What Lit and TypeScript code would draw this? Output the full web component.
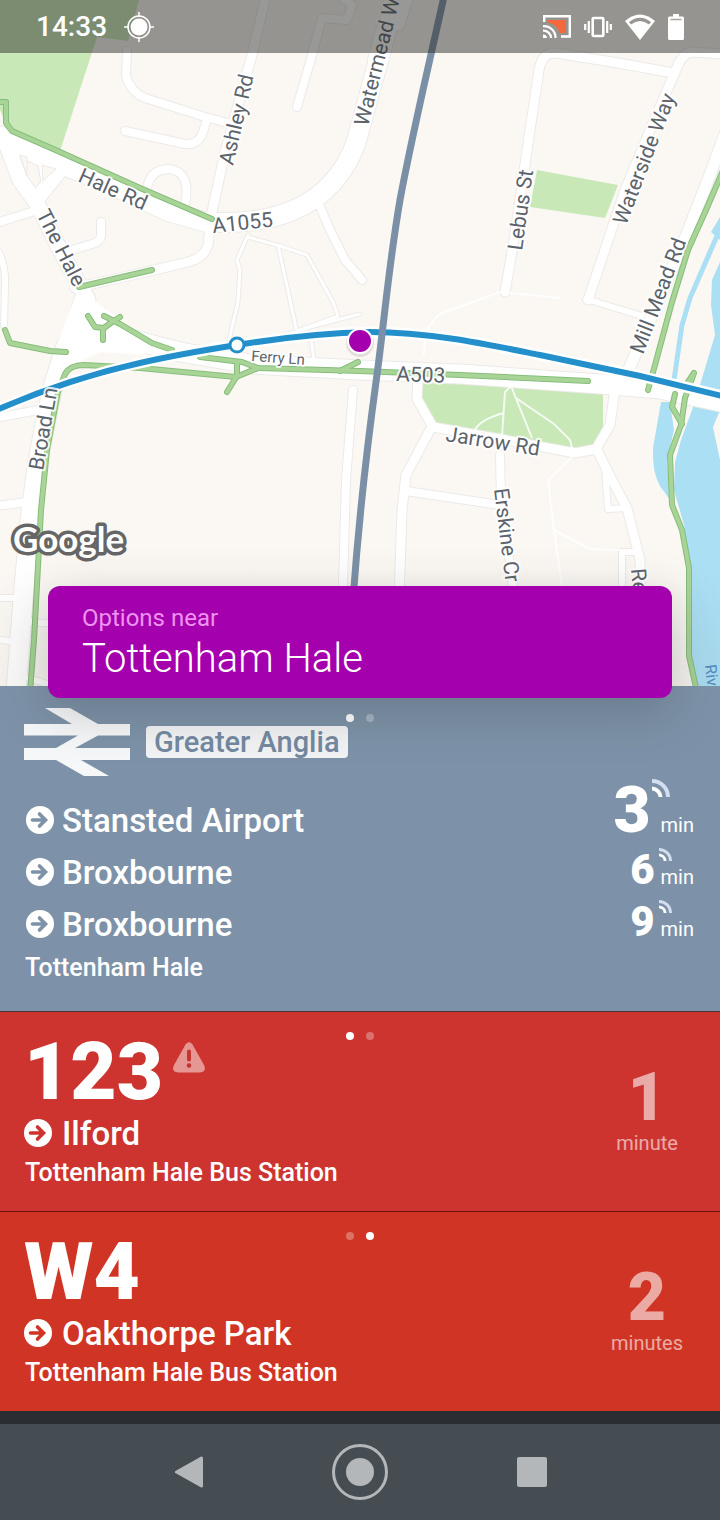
import { LitElement, html, svg, css, nothing } from "lit";
import { customElement, property } from "lit/decorators.js";

interface Departure {
  destination: string;
  minutes: number;
  large?: boolean;
}

interface BusRoute {
  name: string;
  destination: string;
  stop: string;
  minutes: number;
  activePage: number;
  alert: boolean;
  tone: string;
}

const trainDepartures: Departure[] = [
  { destination: "Stansted Airport", minutes: 3, large: true },
  { destination: "Broxbourne", minutes: 6 },
  { destination: "Broxbourne", minutes: 9 },
];

const busRoutes: BusRoute[] = [
  { name: "123", destination: "Ilford", stop: "Tottenham Hale Bus Station", minutes: 1, activePage: 0, alert: true, tone: "crimson" },
  { name: "W4", destination: "Oakthorpe Park", stop: "Tottenham Hale Bus Station", minutes: 2, activePage: 1, alert: false, tone: "scarlet" },
];

/* Streets of the map, grouped by drawn width. */
const streets: { width: number; paths: string[] }[] = [
  {
    width: 3,
    paths: [
      "M248 235L237 260L240 270L238 302L229 340",
      "M278 245L290 300L296 328",
      "M248 237L280 246L307 255L333 302L338 316L300 330",
      "M262 342L310 327L360 314",
      "M310 333L314 360",
    ],
  },
  {
    width: 6,
    paths: [
      "M-4 248Q6 262 5 285L4 325",
      "M586 299L642 316",
      "M605 468L608 509L628 508",
      "M622 600V552H638",
      "M0 598H22",
      "M0 640L20 642",
      "M32 622L54 624",
      "M28 678L54 686",
      "M40 156L45 185",
    ],
  },
  {
    width: 8,
    paths: [
      "M127 51L126 76Q131 92 145 98L205 117L232 124",
      "M125 131L185 144Q199 145 203 132L207 119",
      "M147 188Q150 170 168 169Q192 171 185 205",
      "M340 -4L352 5L347 20L322 18L312 55L297 107",
      "M101 222V236Q100 242 92 244L66 252",
      "M-4 223L38 210",
      "M318 202L331 232L345 260L362 280",
      "M-4 418L38 410",
      "M-4 506L28 502",
      "M353 390L346 480L340 690",
      "M406 491L500 505",
      "M500 455L501 500L515 600",
      "M372 60L380 30L400 26L408 0",
    ],
  },
  {
    width: 9,
    paths: [
      "M266 -4L252 55L225 152L212 212L208 245Q204 258 188 262L150 271L75 288",
      "M505 292L514 240L530 130L539 70Q542 52 556 53L612 62L674 73",
      "M724 54L692 52Q682 53 676 70L655 118L625 190L588 300",
      "M430 430L406 475L402 510L396 690",
      "M597 450L612 480L627 508L640 560V600",
      "M418 378L417 399L433 427L500 439L575 453L596 449L610 425L615 388",
    ],
  },
  {
    width: 11,
    paths: ["M725 134L708 180L686 236L650 320L626 376"],
  },
  {
    width: 15,
    paths: [
      "M4 138L20 180L38 205L60 250L88 300",
      "M60 170L40 195",
    ],
  },
  {
    width: 19,
    paths: [
      "M0 136L40 156L100 180L170 212L205 222Q285 227 325 190Q352 165 360 128L380 55L396 -6",
      "M66 346L52 390L38 460L30 520L23 600L16 692",
      "M84 300L68 350",
      "M88 318L125 338L180 352L250 364L360 370L460 374L600 384L660 389L730 404",
    ],
  },
];

const footpaths: string[] = [
  "M511 386L505 392L502 436",
  "M511 386L532 438",
  "M516 398L554 424L570 440L573 452",
  "M504 413Q478 420 474 432",
  "M573 456L548 480L554 530L564 600",
  "M554 530L590 549L622 550",
  "M424 355Q424 325 440 314L500 292L560 298",
];

const cycleways: string[] = [
  "M-4 102H6V123L12 131L60 152L140 188L212 219",
  "M79 287L152 270",
  "M5 330L10 343L50 351L66 352",
  "M88 316L95 327L104 328L112 322L120 317M103 340V328",
  "M104 316L120 324L152 343L172 350",
  "M200 357L242 362L258 368L360 371L460 375L588 381",
  "M30 692L34 640L41 510L47 450L58 392L65 374Q70 365 84 365L140 368L236 377L258 368",
  "M227 392L237 376V362",
  "M340 371L358 362",
  "M724 168L706 210L688 250L672 302L655 365L648 390",
  "M675 394L672 407L682 424",
  "M684 388L694 373L685 398L681 425L670 455L672 505L682 530L689 568V656L697 692",
];

interface Label {
  text: string;
  x: number;
  y: number;
  angle: number;
  kind?: string;
}

const labels: Label[] = [
  { text: "Ashley Rd", x: 233, y: 166, angle: -77 },
  { text: "Hale Rd", x: 77, y: 181, angle: 24 },
  { text: "The Hale", x: 36, y: 214, angle: 63 },
  { text: "A1055", x: 213, y: 233, angle: -6 },
  { text: "Watermead W", x: 368, y: 127, angle: -76 },
  { text: "Lebus St", x: 522, y: 251, angle: -82 },
  { text: "Waterside Way", x: 626, y: 226, angle: -69 },
  { text: "Mill Mead Rd", x: 643, y: 355, angle: -69 },
  { text: "Broad Ln", x: 43, y: 471, angle: -80 },
  { text: "Ferry Ln", x: 251, y: 361, angle: 4, kind: "small" },
  { text: "A503", x: 396, y: 381, angle: 2 },
  { text: "Jarrow Rd", x: 445, y: 441, angle: 9 },
  { text: "Erskine Cr", x: 494, y: 489, angle: 83 },
  { text: "Re", x: 631, y: 569, angle: 85 },
  { text: "Riv", x: 705, y: 665, angle: 84, kind: "water" },
];

const line = (d: string, cls: string, width?: number) =>
  svg`<path class=${cls} d=${d} stroke-width=${width ?? nothing}></path>`;

@customElement("area-map")
export class AreaMap extends LitElement {
  static styles = css`
    :host { display: block; }
    svg { display: block; width: 100%; height: auto; }
    path { fill: none; }
    .land { fill: #fbf8f4; }
    .park { fill: #c8e8b7; }
    .water { fill: #abdff4; }
    .stream { stroke: #abdff4; }
    .casing { stroke: #eceae8; stroke-linecap: round; stroke-linejoin: round; }
    .road { stroke: #fff; stroke-linecap: round; stroke-linejoin: round; }
    .block { fill: #fbf8f4; stroke: #eceae8; }
    .junction { fill: #fff; }
    .foot { stroke: #fff; stroke-width: 2; stroke-opacity: 0.8; }
    .cycle-edge { stroke: #86bd7a; stroke-width: 6; stroke-linecap: round; stroke-linejoin: round; }
    .cycle { stroke: #a8d597; stroke-width: 4; stroke-linecap: round; stroke-linejoin: round; }
    .tube-halo { stroke: #fff; stroke-width: 11; }
    .tube { stroke: #2390cc; stroke-width: 6; }
    .rail { stroke: #7b90a7; stroke-width: 7; }
    .stop { fill: #fff; stroke: #2390cc; stroke-width: 3; }
    .pin { fill: #a500ad; stroke: #fff; stroke-width: 2; }
    .pin-shade { fill: #000; fill-opacity: 0.1; }
    .label {
      font: 400 21px Roboto, sans-serif;
      fill: #5c636a;
      stroke: #fff;
      stroke-opacity: 0.85;
      stroke-width: 4;
      stroke-linejoin: round;
      paint-order: stroke;
    }
    .label.small { font-size: 15px; }
    .label.water-name { font-size: 16px; fill: #5790c4; stroke: none; }
    .brand {
      font: 700 35px Lato, sans-serif;
      fill: #fff;
      stroke: #666;
      stroke-width: 7;
      stroke-linejoin: round;
      paint-order: stroke;
    }
  `;

  render() {
    const tube =
      "M-6 411C40 391 90 374 140 363C175 355 205 350 237 345C280 338 320 333 370 332C430 332 490 345 540 355L640 376L726 397";
    return html`
      <svg viewBox="0 0 720 686" role="img" aria-label="Map around Tottenham Hale">
        <rect class="land" width="720" height="686"></rect>
        <path class="park" d="M0 0H139L128 41L97 37L60 151L8 128L0 110Z"></path>
        <path class="park" d="M537 170L618 185L605 218L530 207Z"></path>
        <path class="park" d="M422 382L603 391V428L592 446L575 450L433 425L421 402Z"></path>
        <path class="water" d="M711 232L720 217V240Z"></path>
        <path class="stream" stroke-width="5" d="M717 236L690 298L682 325L674 380"></path>
        <path class="water" d="M720 262L712 280L711 305L715 335L700 385L692 410L681 440L675 462L674 490L684 525L690 568V656L698 686H720V460L713 427L720 410Z"></path>
        <path class="water" d="M661 402L653 448Q652 472 660 486L670 500L667 460L674 430L670 402Z"></path>
        ${streets.map((g) => g.paths.map((d) => line(d, "casing", g.width + 2)))}
        ${streets.map((g) => g.paths.map((d) => line(d, "road", g.width)))}
        <path class="junction" d="M78 290L100 305L150 342L145 355L100 352L60 372L52 365L62 330Z"></path>
        <path class="block" d="M20 155L27 157V176Z"></path>
        <path class="block" d="M42 165L56 169L43 181Z"></path>
        ${footpaths.map((d) => line(d, "foot"))}
        ${cycleways.map((d) => line(d, "cycle-edge"))}
        ${cycleways.map((d) => line(d, "cycle"))}
        <path class="tube-halo" d=${tube}></path>
        <path class="tube" d=${tube}></path>
        <circle class="stop" cx="237" cy="345" r="7"></circle>
        <path class="rail" d="M445 -8C430 60 412 135 400 200C388 270 384 325 376 382C366 455 358 530 353 600"></path>
        ${labels.map(
          (l) => svg`<text
            class="label ${l.kind === "water" ? "water-name" : l.kind ?? ""}"
            transform="translate(${l.x} ${l.y}) rotate(${l.angle})"
          >${l.text}</text>`,
        )}
        <circle class="pin-shade" cx="360" cy="343" r="14"></circle>
        <circle class="pin" cx="360" cy="341" r="12"></circle>
        <text class="brand" x="13" y="552">Google</text>
      </svg>
    `;
  }
}

@customElement("page-dots")
export class PageDots extends LitElement {
  @property({ type: Number }) active = 0;

  static styles = css`
    :host { display: flex; gap: 12px; }
    .dot { width: 8px; height: 8px; border-radius: 50%; background: #fff; opacity: 0.3; }
    .dot.on { opacity: 1; }
  `;

  render() {
    return html`${[0, 1].map((i) => html`<span class="dot ${i === this.active ? "on" : ""}"></span>`)}`;
  }
}

const arrow = html`
  <svg class="arrow" viewBox="0 0 28 28" aria-hidden="true">
    <circle cx="14" cy="14" r="14" fill="#fff"></circle>
    <path d="M6.500 14H19M13.500 8L19.500 14L13.500 20" fill="none" stroke="currentColor" stroke-width="3.600" stroke-linecap="round"></path>
  </svg>
`;

const liveSignal = html`
  <svg class="live" viewBox="0 0 18 18" aria-hidden="true">
    <path d="M0 9.500A9 9 0 0 1 8.500 18" fill="none" stroke="#fff" stroke-width="4"></path>
    <path d="M0 2A16 16 0 0 1 16 18" fill="none" stroke="#d3def0" stroke-width="4"></path>
  </svg>
`;

@customElement("app-root")
export class AppRoot extends LitElement {
  static styles = css`
    :host {
      display: block;
      font-family: Roboto, sans-serif;
      color: #fff;
    }
    button { font: inherit; color: inherit; border: 0; padding: 0; background: none; cursor: pointer; }
    a { color: inherit; text-decoration: none; }
    h1, h2, p, ul { margin: 0; padding: 0; font-weight: inherit; font-size: inherit; }
    ul { list-style: none; }
    svg { display: block; flex: none; }
    .screen { display: flex; flex-direction: column; min-height: 100vh; background: #2a2e33; }

    .top { position: relative; z-index: 1; }
    .map-clip { position: relative; overflow: hidden; }
    .map-shade {
      position: absolute; inset: auto 0 0; height: 120px;
      background: linear-gradient(rgba(60, 50, 40, 0), rgba(60, 50, 40, 0.04));
    }
    .status {
      position: absolute; inset: 0 0 auto; height: 53px; box-sizing: border-box;
      display: flex; align-items: center; padding: 0 36px;
      background: rgba(40, 39, 38, 0.48);
      font-size: 28px; font-weight: 500;
    }
    .status .locate { width: 32px; height: 32px; margin-left: 16px; }
    .status .icons { display: flex; align-items: center; gap: 13px; margin-left: auto; }

    .near {
      position: absolute; left: 48px; right: 48px; bottom: -12px;
      height: 112px; box-sizing: border-box; padding: 16px 34px;
      display: flex; flex-direction: column;
      background: #a500ad; border-radius: 12px;
      box-shadow: 0 14px 50px rgba(50, 50, 50, 0.25);
      text-align: left; font-weight: 300;
    }
    .near .hint { font-size: 24px; line-height: 32px; color: #ee92f1; font-weight: 400; }
    .near .place { font-size: 40px; line-height: 50px; }

    .train { position: relative; display: block; background: #7d92a8; padding: 22px 26px 25px; border-bottom: 1px solid #4a3038; }
    .pages { position: absolute; left: 0; right: 0; display: flex; justify-content: center; }
    .train .pages { top: 28px; }
    .operator { display: flex; align-items: center; gap: 16px; height: 68px; margin: 0 -2px; }
    .operator .rail-logo { width: 106px; height: 68px; }
    .operator .name {
      background: #f2f3f5; color: #7489a0; border-radius: 4px;
      font-size: 29px; font-weight: 500; line-height: 32px; padding: 0 8px;
    }
    .departures { margin-top: 18px; }
    .departure { display: flex; align-items: center; height: 52px; color: #fff; }
    .arrow { width: 28px; height: 28px; color: #7d92a8; }
    .destination { font-size: 33px; font-weight: 500; margin-left: 8px; }
    .eta { position: relative; display: flex; align-items: baseline; margin-left: auto; }
    .eta .value { font-size: 42px; line-height: 56px; font-weight: 900; }
    .eta .unit { font-size: 20px; line-height: 52px; margin-left: 6px; }
    .eta .live { position: absolute; right: 22px; top: 6px; width: 13px; height: 13px; }
    .eta.large .value { font-size: 64px; line-height: 44px; margin-right: 4px; }
    .eta.large .live { right: 24px; top: -10px; width: 18px; height: 18px; }
    .stop-name { font-size: 25px; font-weight: 500; line-height: 36px; margin-left: -1px; }

    .bus {
      position: relative; display: flex; align-items: center; justify-content: space-between;
      padding: 20px 24px 19px;
    }
    .bus.crimson { background: #cd3430; border-bottom: 1px solid #701010; }
    .bus.scarlet { background: #d03425; }
    .bus .pages { top: 20px; }
    .bus.crimson .arrow { color: #cd3430; }
    .bus.scarlet .arrow { color: #d03425; }
    .bus .headline { display: flex; gap: 10px; height: 80px; }
    .bus .route { font-size: 80px; line-height: 80px; font-weight: 900; }
    .bus .alert { width: 32px; height: 31px; margin-top: 10px; }
    .bus .toward { display: flex; align-items: center; height: 42px; }
    .bus .destination { margin-left: 10px; }
    .bus .stop-name { line-height: 38px; margin-left: 1px; }
    .bus .wait { width: 74px; margin-right: 12px; padding-bottom: 4px; text-align: center; opacity: 0.58; }
    .bus .wait .value { display: block; font-size: 66px; line-height: 66px; font-weight: 900; }
    .bus .wait .unit { display: block; font-size: 20px; line-height: 24px; margin: 0 -4px; }

    .system {
      display: grid; grid-template-columns: 1fr 60px 1fr; align-items: center; justify-items: center;
      height: 96px; margin-top: auto; padding: 0 47px; background: #454c52;
    }
    .system .key { display: grid; place-items: center; width: 60px; height: 60px; }
  `;

  private renderStatus() {
    return html`
      <div class="status">
        <span>14:33</span>
        <svg class="locate" viewBox="0 0 32 32" aria-hidden="true">
          <circle cx="16" cy="16" r="8.500" fill="#fff"></circle>
          <circle cx="16" cy="16" r="11" fill="none" stroke="#fff" stroke-width="1.500"></circle>
          <path d="M16 1V6M16 26V31M1 16H6M26 16H31" stroke="#fff" stroke-width="1.500"></path>
        </svg>
        <span class="icons">
          <svg width="28" height="24" viewBox="0 0 28 24" aria-hidden="true">
            <path d="M5 5H23V18H16.500Q14 9 5 7.500Z" fill="#f5683c"></path>
            <path d="M1.200 7V1.200H26.800V21.500H18" fill="none" stroke="#fff" stroke-width="2.400"></path>
            <path d="M0 11.200A11.500 11.500 0 0 1 12.500 23M0 15.600A7.500 7.500 0 0 1 8 23" fill="none" stroke="#fff" stroke-width="2.200"></path>
            <path d="M0 19.500A3.600 3.600 0 0 1 4 23H0Z" fill="#fff"></path>
          </svg>
          <svg width="28" height="22" viewBox="0 0 28 22" aria-hidden="true">
            <rect x="8.700" y="2" width="10.600" height="18" rx="1" fill="none" stroke="#fff" stroke-width="2.600"></rect>
            <path d="M4.800 5V17M23.200 5V17M1.200 8V14M26.800 8V14" stroke="#fff" stroke-width="2.200"></path>
          </svg>
          <svg width="30" height="26" viewBox="0 0 30 26" aria-hidden="true">
            <path d="M0 7Q15 -6 30 7L15 26Z" fill="#fff"></path>
            <path d="M5 9.300Q15 1.500 25 9.300" fill="none" stroke="#999691" stroke-width="3"></path>
          </svg>
          <svg width="16" height="26" viewBox="0 0 16 26" aria-hidden="true">
            <path d="M5 0H11V2.500H14.500Q16 2.500 16 4V24.500Q16 26 14.500 26H1.500Q0 26 0 24.500V4Q0 2.500 1.500 2.500H5Z" fill="#fff"></path>
            <path d="M2.500 5.500H13.500" stroke="#aaa7a3" stroke-width="1.500"></path>
          </svg>
        </span>
      </div>
    `;
  }

  private renderTrain() {
    return html`
      <a class="train" href="#greater-anglia">
        <span class="pages"><page-dots .active=${0}></page-dots></span>
        <div class="operator">
          <svg class="rail-logo" viewBox="0 0 106 68" aria-label="National Rail">
            <path
              fill="#f6f7f8"
              d="M21 0H46L74 16H106V27.500H74L51 40H106V52H57L85 68H60L32 52H0V40H32L54 27.500H0V16H48Z"
            ></path>
          </svg>
          <span class="name">Greater Anglia</span>
        </div>
        <ul class="departures">
          ${trainDepartures.map(
            (d) => html`
              <li class="departure">
                ${arrow}
                <span class="destination">${d.destination}</span>
                <span class="eta ${d.large ? "large" : ""}">
                  <span class="value">${d.minutes}</span>
                  <span class="unit">min</span>
                  ${liveSignal}
                </span>
              </li>
            `,
          )}
        </ul>
        <p class="stop-name">Tottenham Hale</p>
      </a>
    `;
  }

  private renderBus(bus: BusRoute) {
    return html`
      <a class="bus ${bus.tone}" href="#${bus.name}">
        <span class="pages"><page-dots .active=${bus.activePage}></page-dots></span>
        <div>
          <div class="headline">
            <h2 class="route">${bus.name}</h2>
            ${bus.alert
              ? html`
                  <svg class="alert" viewBox="0 0 32 31" aria-label="Disruption">
                    <path
                      d="M12.500 2.500Q16 -2.200 19.500 2.500L31 23Q34 30 27 30.500H5Q-2 30 1 23Z"
                      fill="#e79793"
                    ></path>
                    <path d="M16 9.500V17.500" stroke="#c63431" stroke-width="4" stroke-linecap="round"></path>
                    <circle cx="16" cy="23.500" r="2.300" fill="#c63431"></circle>
                  </svg>
                `
              : nothing}
          </div>
          <div class="toward">${arrow}<span class="destination">${bus.destination}</span></div>
          <p class="stop-name">${bus.stop}</p>
        </div>
        <div class="wait">
          <span class="value">${bus.minutes}</span>
          <span class="unit">${bus.minutes === 1 ? "minute" : "minutes"}</span>
        </div>
      </a>
    `;
  }

  render() {
    return html`
      <div class="screen">
        <header class="top">
          <div class="map-clip">
            <area-map></area-map>
            <div class="map-shade"></div>
            ${this.renderStatus()}
          </div>
          <button class="near" type="button">
            <span class="hint">Options near</span>
            <span class="place">Tottenham Hale</span>
          </button>
        </header>
        <main>
          ${this.renderTrain()} ${busRoutes.map((b) => this.renderBus(b))}
        </main>
        <nav class="system">
          <button class="key" type="button" aria-label="Back">
            <svg width="30" height="32" viewBox="0 0 30 32">
              <path d="M2.500 16L27.500 2V30Z" fill="#b3b7b9" stroke="#b3b7b9" stroke-width="3" stroke-linejoin="round"></path>
            </svg>
          </button>
          <button class="key" type="button" aria-label="Home">
            <svg width="56" height="56" viewBox="0 0 56 56">
              <circle cx="28" cy="28" r="26.500" fill="none" stroke="#b3b7b9" stroke-width="3"></circle>
              <circle cx="28" cy="28" r="14" fill="#b3b7b9"></circle>
            </svg>
          </button>
          <button class="key" type="button" aria-label="Recent apps">
            <svg width="30" height="30" viewBox="0 0 30 30">
              <rect width="30" height="30" rx="2" fill="#b3b7b9"></rect>
            </svg>
          </button>
        </nav>
      </div>
    `;
  }
}
